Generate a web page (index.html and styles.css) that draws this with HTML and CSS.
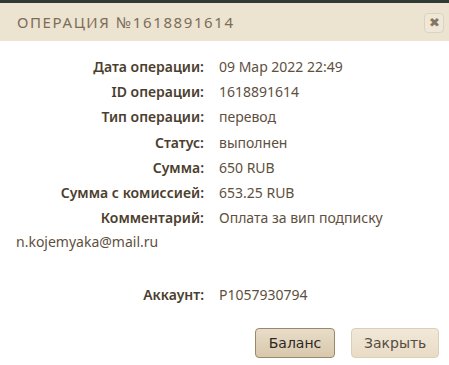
FILE: index.html
```html
<!DOCTYPE html>
<html lang="ru">
<head>
    <meta charset="UTF-8">
    <title>Операция</title>
    <link rel="stylesheet" href="styles.css">
</head>
<body>
    <div class="top-strip"></div>
    <div class="dialog">
        <div class="dialog-header">
            <h2>Операция №1618891614</h2>
            <button class="close-btn">&#10006;</button>
        </div>
        <div class="dialog-body">
            <div class="details">
                <div class="label">Дата операции:</div><div class="value">09 Мар 2022 22:49</div>
                <div class="label">ID операции:</div><div class="value">1618891614</div>
                <div class="label">Тип операции:</div><div class="value">перевод</div>
                <div class="label">Статус:</div><div class="value">выполнен</div>
                <div class="label">Сумма:</div><div class="value">650 RUB</div>
                <div class="label">Сумма с комиссией:</div><div class="value">653.25 RUB</div>
                <div class="label">Комментарий:</div><div class="value">Оплата за вип подписку</div>
            </div>
            <div class="email">n.kojemyaka@mail.ru</div>
            <div class="details account">
                <div class="label">Аккаунт:</div><div class="value">P1057930794</div>
            </div>
        </div>
        <div class="dialog-footer">
            <button class="btn btn-main">Баланс</button>
            <button class="btn">Закрыть</button>
        </div>
    </div>
</body>
</html>
```

FILE: styles.css
```css
* {
    margin: 0;
    padding: 0;
    box-sizing: border-box;
}

body {
    background-color: #ffffff;
    font-family: "Noto Sans", Arial, sans-serif;
    width: 449px;
    height: 365px;
    overflow: hidden;
}

.top-strip {
    height: 3px;
    background-color: #313b35;
}

/* Header */
.dialog-header {
    height: 38px;
    background-color: #ece3d1;
    display: flex;
    align-items: center;
    justify-content: space-between;
    padding: 0 5px 0 17px;
}

.dialog-header h2 {
    font-weight: normal;
    font-size: 15px;
    letter-spacing: 1.6px;
    text-transform: uppercase;
    color: #7c6d59;
}

.close-btn {
    width: 20px;
    height: 20px;
    border: 1px solid #ddd2bf;
    border-radius: 4px;
    background-color: #efe7d8;
    color: #857561;
    font-size: 13px;
    line-height: 18px;
    margin-top: 2px;
}

/* Body */
.dialog-body {
    padding: 16px 16px 0 16px;
    font-size: 14px;
}

.details {
    display: grid;
    grid-template-columns: 188px auto;
    column-gap: 15px;
    row-gap: 5.2px;
}

.label {
    text-align: right;
    color: #4b3e2e;
    font-weight: 600;
    height: 20px;
    line-height: 20px;
}

.value {
    color: #5e503e;
    height: 20px;
    line-height: 20px;
}

.email {
    color: #5e503e;
    margin-top: 4px;
    line-height: 20px;
}

.account {
    margin-top: 33px;
}

/* Footer */
.dialog-footer {
    display: flex;
    justify-content: flex-end;
    gap: 16px;
    padding: 23px 10px 0 0;
}

.btn {
    height: 30px;
    padding: 0 12px;
    font-family: "DejaVu Sans", sans-serif;
    font-size: 14px;
    border-radius: 4px;
    border: 1px solid #dccfb8;
    background: linear-gradient(#f1e8d8, #e8dcc6);
    color: #574c41;
    width: 88px;
}

.btn-main {
    width: 80px;
    border-color: #9b8769;
    background: linear-gradient(#e8ddc9, #d8c8ac);
    color: #2d2824;
}
```
